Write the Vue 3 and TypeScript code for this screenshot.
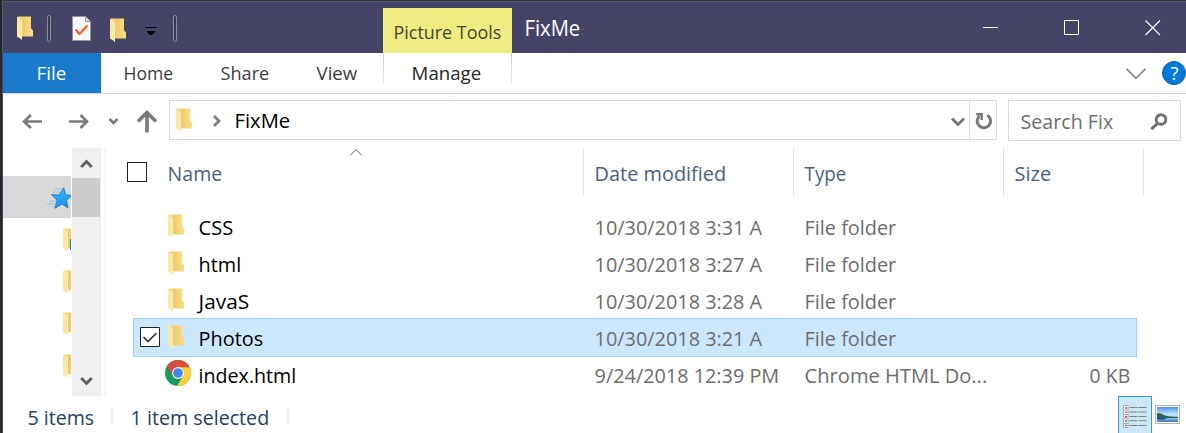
<script setup lang="ts">
import { h } from 'vue'

interface LabelProps { text: string; w: number; size?: number }

// Single-line caption with a fixed advance width; its baseline sits 22px below its top.
const Label = (p: LabelProps) =>
  h('svg', { class: 'label', width: p.w, height: 29 }, [
    h('text', {
      x: 0.6, y: 22, fill: 'currentColor', 'font-size': p.size ?? 20.8,
      textLength: p.w - 1.4, lengthAdjust: 'spacingAndGlyphs',
    }, p.text),
  ])
Label.props = ['text', 'w', 'size']

const Folder = () =>
  h('svg', { class: 'folder', width: 17, height: 25, viewBox: '0 0 17 25' }, [
    h('path', { d: 'M1 .5h13v12l2 2v6H4z', fill: '#f6d778' }),
    h('path', { d: 'M5 1h9v12l2 2v5H5z', fill: 'url(#folderBack)' }),
    h('path', { d: 'M0 .5l5 3.2v20.1L0 20.4z', fill: '#ffe7a2' }),
    h('path', { d: 'M5 3.7v20.1l-1-.6V3z', fill: '#fff0bd' }),
  ])

interface Row { name: string; nw: number; date: string; dw: number; type: string; tw: number; size?: string; selected?: boolean }
const rows: Row[] = [
  { name: 'CSS', nw: 36, date: '10/30/2018 3:31 A', dw: 169, type: 'File folder', tw: 93 },
  { name: 'html', nw: 44, date: '10/30/2018 3:27 A', dw: 169, type: 'File folder', tw: 93 },
  { name: 'JavaS', nw: 52, date: '10/30/2018 3:28 A', dw: 169, type: 'File folder', tw: 93 },
  { name: 'Photos', nw: 66, date: '10/30/2018 3:21 A', dw: 169, type: 'File folder', tw: 93, selected: true },
  { name: 'index.html', nw: 99, date: '9/24/2018 12:39 PM', dw: 186, type: 'Chrome HTML Do...', tw: 184, size: '0 KB' },
]
</script>

<template>
  <div class="window">
    <svg class="defs" width="0" height="0">
      <defs>
        <linearGradient id="folderBack" x2="1"><stop stop-color="#eccb6b" /><stop offset="1" stop-color="#fbdd87" /></linearGradient>
        <linearGradient id="starFill" y2="1" x2="0"><stop stop-color="#39b7f5" /><stop offset="1" stop-color="#1593ea" /></linearGradient>
        <linearGradient id="sky" y2="1" x2="0"><stop stop-color="#4d94ed" /><stop offset=".5" stop-color="#c5e6fa" /><stop offset=".75" stop-color="#8fc0e4" /><stop offset="1" stop-color="#3976b5" /></linearGradient>
      </defs>
    </svg>
    <header class="titlebar">
      <div class="quick">
        <Folder />
        <i class="grip first"></i>
        <svg class="props" width="19" height="25" viewBox="0 0 19 25">
          <path d="M.5.5h13l5 5v19H.5z" fill="#f7f7f8" stroke="#98949c" />
          <path d="M13.5.5v5h5" fill="#ddd" stroke="#98949c" />
          <path d="M3.5 13.5l4 4.5 8-8.5" fill="none" stroke="#ef5d19" stroke-width="2" />
        </svg>
        <Folder class="new" />
        <svg class="custom" width="12" height="10" viewBox="0 0 12 10"><path d="M0 .5h12M2 4.5h8" stroke="#000" /><path d="M2 4h8v1L7 8H5L2 5z" /></svg>
        <i class="grip second"></i>
      </div>
      <div class="context"><Label text="Picture Tools" :w="109" :size="18.5" /></div>
      <Label class="caption" text="FixMe" :w="57" :size="21" />
      <svg class="controls" width="179" height="16" viewBox="0 0 179 16" fill="none" stroke="#fff">
        <path d="M0 7.500h15M81.500.500h14v14h-14z" /><path d="M162.500.500l14.500 14.500M177 .500l-14.500 14.500" stroke-width="1.100" />
      </svg>
    </header>

    <nav class="ribbon">
      <div class="file"><Label text="File" :w="31" :size="18" /></div>
      <Label class="home" text="Home" :w="51" :size="18" />
      <Label class="share" text="Share" :w="50" :size="18" />
      <Label class="view" text="View" :w="42" :size="18" />
      <div class="manage"><Label text="Manage" :w="71" :size="18" /></div>
      <svg class="expand" width="20" height="12" viewBox="0 0 20 12" fill="none" stroke="#8a8a8a" stroke-width="1.700"><path d="M.5 .8l9.500 9.500 9.500-9.500" /></svg>
      <svg class="help" width="24" height="24" viewBox="0 0 24 24">
        <circle cx="12" cy="12" r="11.500" fill="#0078d7" stroke="#0869b5" />
        <text x="12.500" y="18.500" text-anchor="middle" font-size="18.500" font-weight="500" fill="#fff">?</text>
      </svg>
    </nav>

    <div class="address-row">
      <svg class="arrows" width="137" height="24" viewBox="0 0 137 24" fill="none" stroke="#7b7b7b">
        <path d="M1.500 12.500H20M9 6L2 12.500 9 19" stroke-width="2.700" />
        <path d="M47 12.500h18.500M58.500 6l6.500 6.500-6.500 6.500" stroke-width="2.700" />
        <path d="M87.500 10l4 4 4-4" stroke-width="2.600" />
        <path d="M125 23.500V4M116 12.500l9-9 9 9" stroke-width="3.600" />
      </svg>
      <div class="path">
        <Folder />
        <svg class="crumb" width="8" height="12" viewBox="0 0 8 12" fill="none" stroke="#7c7c7c" stroke-width="2.800"><path d="M1 1l5 5-5 5" /></svg>
        <Label text="FixMe" :w="57" />
        <svg class="drop" width="14" height="10" viewBox="0 0 14 10" fill="none" stroke="#777" stroke-width="2.900"><path d="M1 1.500l6 6 6-6" /></svg>
        <div class="refresh">
          <svg width="18" height="18" viewBox="0 0 18 18" fill="none" stroke="#777" stroke-width="3"><path d="M12.300 3.300A6.700 6.700 0 1 1 4.500 4" /><path d="M1.200 2.300h5.500V8" stroke-width="2.400" /></svg>
        </div>
      </div>
      <div class="search">
        <Label text="Search Fix" :w="94" />
        <svg width="18" height="18" viewBox="0 0 18 18" fill="none" stroke="#6e6e6e"><circle cx="11" cy="6.500" r="4.800" stroke-width="2.900" /><path d="M7.800 10.200L1.300 16.200" stroke-width="3" /></svg>
      </div>
    </div>

    <main class="body">
      <aside class="tree">
        <div class="pinned">
          <svg width="25" height="23" viewBox="0 0 25 23">
            <path d="M7 2h9M5 5h9M3 14h6M0 17h8M5 20h3" stroke="#8fc4e6" stroke-width="1" />
            <path d="M16.800.8l1.700 7.200 6.500.4-5.500 4.800 1.500 7.800-6-4-7 4.200 2-8L4.500 7.700l7.500.3z" fill="url(#starFill)" stroke="#1678c4" stroke-width=".9" />
          </svg>
        </div>
        <div v-for="n in 4" :key="n" class="branch"><Folder /><i v-if="n === 1" class="badge"></i></div>
      </aside>
      <div class="scroll">
        <svg width="13" height="10" viewBox="0 0 13 10" fill="none" stroke="#606060" stroke-width="2.900"><path d="M1.200 8l5.300-5.500L11.800 8" /></svg>
        <div class="thumb"></div>
        <svg class="down" width="13" height="10" viewBox="0 0 13 10" fill="none" stroke="#606060" stroke-width="2.900"><path d="M1.200 2l5.300 5.500L11.800 2" /></svg>
      </div>
      <div class="splitter"></div>
      <section class="list">
        <div class="head">
          <div class="cell name"><i class="check"></i><Label text="Name" :w="56" />
            <svg class="sort" width="12" height="7" viewBox="0 0 12 7" fill="none" stroke="#606060"><path d="M.5 6L6 .7 11.500 6" /></svg>
          </div>
          <div class="cell"><Label text="Date modified" :w="133" /></div>
          <div class="cell"><Label text="Type" :w="43" /></div>
          <div class="cell"><Label text="Size" :w="38" /></div>
        </div>
        <div v-for="r in rows" :key="r.name" class="row" :class="{ selected: r.selected }">
          <div class="tick">
            <svg v-if="r.selected" width="20" height="20" viewBox="0 0 20 20"><path d="M.5.5h19v19H.5z" fill="#fff" stroke="#222" /><path d="M3.500 10l4.500 4.500 8.500-8.500" fill="none" stroke="#333" stroke-width="1.600" /></svg>
          </div>
          <div class="icon">
            <svg v-if="r.size" class="chrome" width="26" height="26" viewBox="0 0 26 26">
              <circle cx="13" cy="13" r="13" fill="#179c5b" />
              <path d="M13 13L1.800 6.400A13 13 0 0 1 24.700 7.300z" fill="#db4b3e" />
              <path d="M13 7.300h11.700A13 13 0 0 1 12 26l6-10z" fill="#fecb3e" />
              <path d="M1.800 6.400L8 16l5-9z" fill="#db4b3e" />
              <circle cx="13" cy="13" r="5.900" fill="#fff" /><circle cx="13" cy="13" r="4.800" fill="#4a86ee" />
            </svg>
            <Folder v-else />
          </div>
          <div class="fname"><Label :text="r.name" :w="r.nw" /></div>
          <div class="date"><Label :text="r.date" :w="r.dw" /></div>
          <div class="type"><Label :text="r.type" :w="r.tw" /></div>
          <div class="size"><Label v-if="r.size" :text="r.size" :w="42" /></div>
        </div>
      </section>
    </main>

    <footer class="status">
      <Label text="5 items" :w="68" />
      <i class="sep"></i>
      <Label class="sel" text="1 item selected" :w="140" />
      <i class="sep last"></i>
      <div class="details">
        <svg width="24" height="23" viewBox="0 0 24 23">
          <path d="M.5.5h4.500v22H.5z" fill="#fff" stroke="#aaa" /><path d="M0 5h5M0 9.500h5M0 14h5M0 18.500h5" stroke="#aaa" />
          <path d="M2 3h2M2 16h2M2 20.500h2" stroke="#477f9b" stroke-width="1.500" /><path d="M2 7.300h2" stroke="#a88534" stroke-width="1.500" /><path d="M2 11.700h2" stroke="#e24127" stroke-width="2" />
          <path d="M6.500 2.500h8m1 0h8M6.500 7h8m1 0h8M6.500 11.500h8m1 0h8M6.500 15.700h8m1 0h8M6.500 20.500h8m1 0h8" stroke="#7c8285" />
        </svg>
      </div>
      <svg class="thumbs" width="25" height="19" viewBox="0 0 25 19">
        <path d="M.5.5h24v18H.5z" fill="#fff" stroke="#b2b2b2" /><path d="M2 2h21v15H2z" fill="url(#sky)" />
        <path d="M2 8l4 .5 4 2 5 1 8 .5v1H2z" fill="#286350" /><path d="M2 12.500h11l-4 2H2z" fill="#174f80" />
      </svg>
    </footer>
  </div>
</template>

<style>
html, body { overflow: hidden; background: #fff; }
</style>

<style scoped>
.window { box-sizing: border-box; width: 1186px; height: 433px; position: relative; overflow: hidden; background: #fff; border-left: 2px solid #28292a; border-top: 1px solid #30363a; font-family: "Open Sans", "Noto Sans", sans-serif; }
.window * { box-sizing: border-box; }
.defs { position: absolute; }
svg { display: block; flex: none; overflow: visible; }
i { display: block; }
.titlebar { height: 52px; background: #464466; border-top: 1px solid #5b5877; border-left: 1px solid #5b5877; display: flex; align-items: flex-start; }
.quick { width: 380px; height: 51px; display: flex; align-items: flex-start; padding: 14px 0 0 14px; flex: none; }
.grip { width: 4px; height: 27px; border: 1px solid #8e8ca2; border-radius: 2px; background: #39384f; margin-top: -1px; flex: none; }
.grip.first { margin-left: 13px; }
.props { margin-left: 21px; }
.new { margin: 2px 0 0 19px; }
.custom { margin: 11px 0 0 18px; }
.grip.second { margin-left: 16px; }
.context { width: 129px; height: 45px; margin-top: 6px; background: #efed82; color: #454532; padding: 9px 0 0 10px; flex: none; }
.caption { margin: 12px 0 0 12px; color: #fff; }
.controls { margin: 18px 0 0 402px; }
.ribbon { height: 41px; border-left: 1px solid #464466; border-bottom: 1px solid #d9dadc; display: flex; align-items: flex-start; color: #3c3d42; }
.file { width: 98px; height: 40px; background: #1979ca; color: #fff; padding: 5px 0 0 33px; flex: none; }
.ribbon > .label { margin-top: 5px; }
.home { margin-left: 22px; }
.share { margin-left: 46px; }
.view { margin-left: 46px; }
.manage { width: 129px; height: 31px; margin-left: 25px; padding: 5px 0 0 27px; border: solid; border-width: 0 1px; border-image: linear-gradient(#c8c8c8, #eee) 1; color: #262626; flex: none; }
.expand { margin: 15px 0 0 614px; }
.help { margin: 8px 0 0 16px; }
.address-row { height: 54px; border-left: 1px solid #464466; display: flex; align-items: flex-start; padding-top: 6px; }
.arrows { margin: 9px 0 0 19px; }
.path { width: 828px; height: 40px; border: 1px solid #d9d9d9; margin-left: 10px; display: flex; align-items: flex-start; padding: 0 0 0 6px; flex: none; color: #000; }
.path .folder { margin-top: 7px; }
.crumb { margin: 14px 0 0 20px; }
.path .label { margin: 5px 0 0 13px; }
.drop { margin: 16px 0 0 660px; }
.refresh { width: 28px; height: 38px; margin-left: 4px; border-left: 1px solid #d9d9d9; padding: 11px 0 0 5px; }
.search { width: 173px; height: 41px; border: 1px solid #d9d9d9; margin-left: 11px; padding: 6px 0 0 11px; display: flex; color: #6d6d6d; flex: none; }
.search svg:last-child { margin: 6px 0 0 36px; }
.body { display: flex; height: 248px; border-left: 1px solid #464466; }
.tree { width: 68px; padding-top: 28px; overflow: hidden; flex: none; }
.pinned { height: 42px; background: #d9d9d9; padding: 11px 0 0 44px; }
.branch { height: 42px; padding: 10px 0 0 60px; position: relative; }
.badge { position: absolute; left: 67px; top: 21px; width: 2px; height: 11px; background: #1783b5; }
.scroll { width: 29px; margin-left: 1px; background: #f0f0f0; padding-top: 11px; display: flex; flex-direction: column; align-items: flex-start; flex: none; }
.scroll svg { margin-left: 8px; }
.thumb { width: 28px; height: 39px; margin-top: 9px; background: #cdcdcd; }
.down { margin-top: 159px; }
.splitter { width: 2px; margin-left: 3px; background: #f6f6f6; flex: none; }
.list { margin-left: 27px; width: 1011px; flex: none; }
.head { height: 61px; display: flex; color: #4b617f; }
.cell { width: 210px; height: 48px; border-right: 1px solid #e3e3e3; padding: 11px 0 0 10px; display: flex; align-items: flex-start; flex: none; }
.cell.name { width: 451px; padding-left: 0; position: relative; }
.cell:last-child { width: 140px; }
.check { width: 20px; height: 20px; border: 1px solid #222; margin: 3px 0 0 -6px; flex: none; }
.check + .label { margin-left: 20px; }
.sort { position: absolute; left: 217px; top: 1px; }
.row { position: relative; width: 1004px; height: 37px; display: grid; grid-template-columns: 28px 37px 396px 210px 210px 1fr; color: #6d6d6d; }
.row > div { position: relative; padding-top: 4px; }
.row.selected::before { content: ""; position: absolute; inset: -2px 0 0; background: #cce8ff; border: 1px solid #99d1ff; }
.row > .tick { padding: 7px 0 0 7px; }
.row > .icon { padding: 5px 0 0 7px; }
.chrome { margin: -2px 0 0 -3px; }
.fname { color: #000; }
.size { display: flex; justify-content: flex-end; padding-right: 6px; }
.status { height: 37px; border-left: 1px solid #464466; display: flex; align-items: flex-start; color: #26405f; }
.status > .label { margin: 7px 0 0 24px; }
.sep { width: 2px; height: 18px; background: #f0f0f0; margin: 11px 0 0 16px; flex: none; }
.status > .sel { margin-left: 17px; }
.last { margin-left: 17px; }
.details { width: 34px; height: 37px; background: #cce8f6; border: 1px solid #2aa1dc; border-bottom: 0; margin-left: 829px; padding: 8px 0 0 4px; flex: none; }
.thumbs { margin: 9px 0 0 3px; }
</style>
